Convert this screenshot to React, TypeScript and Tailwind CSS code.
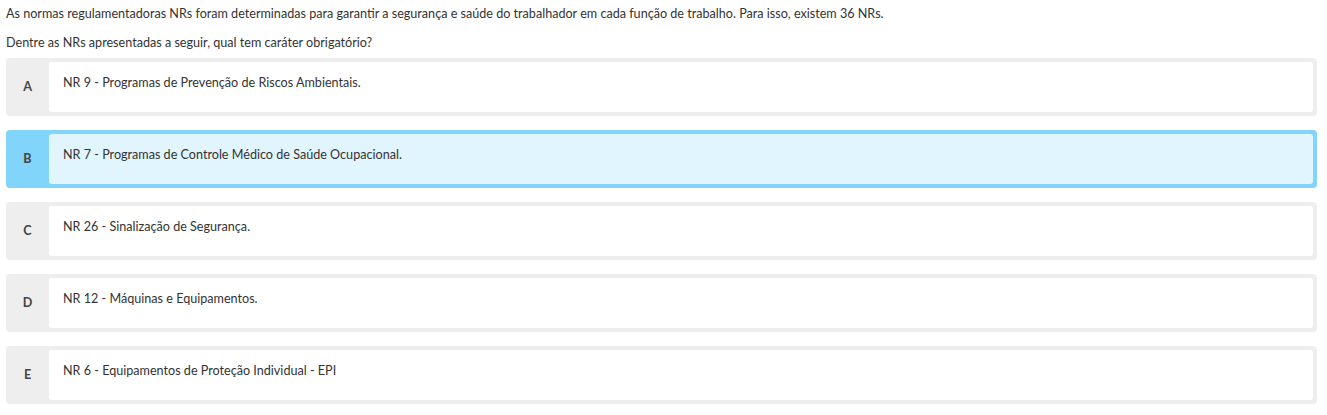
import React from 'react';

interface Option {
  letter: string;
  text: string;
}

const options: Option[] = [
  { letter: 'A', text: 'NR 9 - Programas de Prevenção de Riscos Ambientais.' },
  { letter: 'B', text: 'NR 7 - Programas de Controle Médico de Saúde Ocupacional.' },
  { letter: 'C', text: 'NR 26 - Sinalização de Segurança.' },
  { letter: 'D', text: 'NR 12 - Máquinas e Equipamentos.' },
  { letter: 'E', text: 'NR 6 - Equipamentos de Proteção Individual - EPI' },
];

const selected = 'B';

const App: React.FC = () => {
  return (
    <div
      className="min-h-screen bg-white pl-[6px] pr-[10px] text-[12.6px] leading-[15px] text-[#333]"
      style={{ fontFamily: 'Lato, "Open Sans", sans-serif' }}
    >
      <p className="pt-[6px]">
        As normas regulamentadoras NRs foram determinadas para garantir a segurança e saúde do trabalhador em cada função de trabalho. Para isso, existem 36 NRs.
      </p>
      <p className="mt-[14px]">Dentre as NRs apresentadas a seguir, qual tem caráter obrigatório?</p>

      <div className="mt-[8px] flex flex-col gap-[14px]">
        {options.map((opt) => {
          const active = opt.letter === selected;
          return (
            <div
              key={opt.letter}
              className={
                active
                  ? 'flex h-[58px] rounded-[4px] bg-[#81d4fa] py-[4px] pr-[4px]'
                  : 'flex h-[58px] rounded-[4px] bg-[#eeeeee] py-[4px] pr-[4px]'
              }
            >
              <div className="flex w-[43px] shrink-0 items-center justify-center pb-[2px] font-bold text-[#444]">
                {opt.letter}
              </div>
              <div
                className={
                  active
                    ? 'flex-1 rounded-[3px] bg-[#e1f5fe] pl-[14px] pt-[13px]'
                    : 'flex-1 rounded-[3px] bg-white pl-[14px] pt-[13px]'
                }
              >
                {opt.text}
              </div>
            </div>
          );
        })}
      </div>
    </div>
  );
};

export default App;
